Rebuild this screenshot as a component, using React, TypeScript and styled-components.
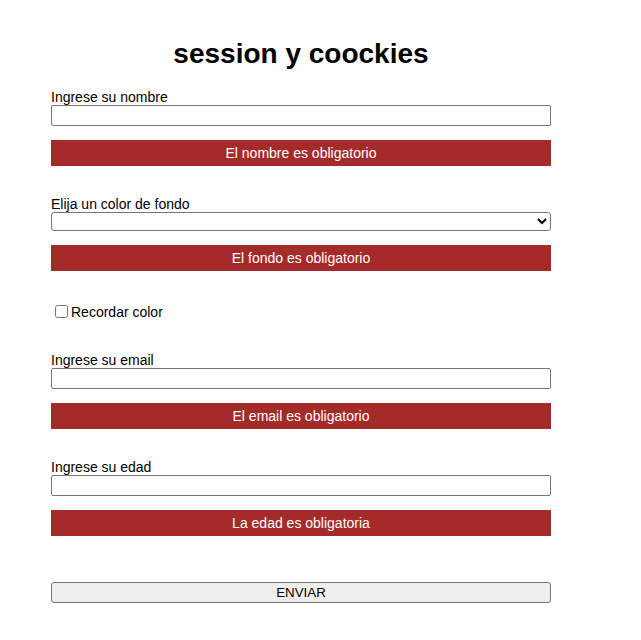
import React from "react";
import styled, { createGlobalStyle } from "styled-components";

const Global = createGlobalStyle`
  body {
    margin: 0;
    background: #ffffff;
    font-family: "Liberation Sans", Arial, sans-serif;
    color: #000000;
  }
`;

const Page = styled.main`
  width: 500px;
  margin-left: 51px;
  padding-top: 38px;
`;

const Title = styled.h1`
  margin: 0 0 19px;
  font-size: 28px;
  line-height: 32px;
  font-weight: 700;
  text-align: center;
`;

const Form = styled.form`
  display: flex;
  flex-direction: column;
`;

const Group = styled.div`
  display: flex;
  flex-direction: column;
  margin-bottom: 30px;
`;

const Label = styled.label`
  font-size: 14px;
  line-height: 16px;
`;

const TextInput = styled.input`
  box-sizing: border-box;
  width: 500px;
  height: 21px;
  margin: 0;
  padding: 1px 2px;
  border: 1px solid #767676;
  border-radius: 2px;
  font-family: "Liberation Sans", Arial, sans-serif;
  font-size: 13.33px;
`;

const Select = styled.select`
  box-sizing: border-box;
  width: 500px;
  height: 19px;
  margin: 0;
  border: 1px solid #767676;
  border-radius: 3px;
  background: #ffffff;
  font-family: "Liberation Sans", Arial, sans-serif;
  font-size: 13.33px;
`;

const ErrorBar = styled.div`
  margin-top: 14px;
  height: 26px;
  background: #a52a2a;
  color: #ffffff;
  font-size: 14px;
  line-height: 26px;
  text-align: center;
`;

const CheckRow = styled.div`
  display: flex;
  align-items: center;
  height: 19px;
  margin: 1px 0 31px;
  font-size: 14px;
  line-height: 16px;
`;

const Check = styled.input`
  width: 13px;
  height: 13px;
  margin: 3px 3px 3px 4px;
`;

const Submit = styled.button`
  box-sizing: border-box;
  width: 500px;
  height: 21px;
  margin-top: 16px;
  padding: 1px 6px;
  border: 1px solid #767676;
  border-radius: 3px;
  background: #efefef;
  color: #000000;
  font-family: "Liberation Sans", Arial, sans-serif;
  font-size: 13.33px;
`;

export default function App() {
  return (
    <>
      <Global />
      <Page>
        <Title>session y coockies</Title>
        <Form onSubmit={(e) => e.preventDefault()}>
          <Group>
            <Label htmlFor="nombre">Ingrese su nombre</Label>
            <TextInput id="nombre" type="text" />
            <ErrorBar>El nombre es obligatorio</ErrorBar>
          </Group>
          <Group>
            <Label htmlFor="fondo">Elija un color de fondo</Label>
            <Select id="fondo" defaultValue="">
              <option value=""></option>
              <option value="rojo">Rojo</option>
              <option value="verde">Verde</option>
              <option value="azul">Azul</option>
            </Select>
            <ErrorBar>El fondo es obligatorio</ErrorBar>
          </Group>
          <CheckRow>
            <Check type="checkbox" id="recordar" />
            <Label htmlFor="recordar">Recordar color</Label>
          </CheckRow>
          <Group>
            <Label htmlFor="email">Ingrese su email</Label>
            <TextInput id="email" type="text" />
            <ErrorBar>El email es obligatorio</ErrorBar>
          </Group>
          <Group>
            <Label htmlFor="edad">Ingrese su edad</Label>
            <TextInput id="edad" type="text" />
            <ErrorBar>La edad es obligatoria</ErrorBar>
          </Group>
          <Submit type="submit">ENVIAR</Submit>
        </Form>
      </Page>
    </>
  );
}
